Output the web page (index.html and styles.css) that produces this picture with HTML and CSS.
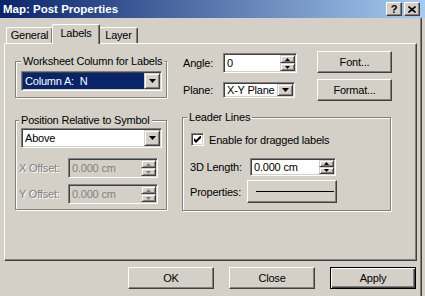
FILE: index.html
```html
<!DOCTYPE html>
<html lang="en">
<head>
  <meta charset="UTF-8" />
  <title>Map: Post Properties</title>
  <link rel="stylesheet" href="styles.css">
</head>
<body>

  <div class="window">
    <div class="titlebar">
      <span class="title">Map: Post Properties</span>
      <div class="caption-btns">
        <span class="cbtn help">?</span>
        <span class="cbtn">
          <svg width="8" height="7" viewBox="0 0 8 7"><path d="M0.5 0.5L7.5 6.5M7.5 0.5L0.5 6.5" stroke="#000" stroke-width="1.6"/></svg>
        </span>
      </div>
    </div>

    <div class="client">
      <div class="tabs">
        <div class="tab">General</div>
        <div class="tab active">Labels</div>
        <div class="tab">Layer</div>
      </div>

      <div class="panel">
        <div class="col-left">
          <fieldset class="group g-column">
            <legend>Worksheet Column for Labels</legend>
            <div class="combo combo-selected">
              <span class="combo-text">Column A:  N</span>
              <span class="drop-btn"><svg width="7" height="4" viewBox="0 0 7 4"><path d="M0 0h7L3.5 4z"/></svg></span>
            </div>
          </fieldset>

          <fieldset class="group g-position">
            <legend>Position Relative to Symbol</legend>
            <div class="combo">
              <span class="combo-text">Above</span>
              <span class="drop-btn"><svg width="7" height="4" viewBox="0 0 7 4"><path d="M0 0h7L3.5 4z"/></svg></span>
            </div>
            <div class="offset-row first">
              <span class="label disabled">X Offset:</span>
              <div class="edit edit-disabled">
                <span class="edit-text">0.000 cm</span>
                <span class="spin">
                  <span class="spin-btn"><svg width="5" height="3" viewBox="0 0 5 3"><path d="M0 3h5L2.5 0z"/></svg></span>
                  <span class="spin-btn"><svg width="5" height="3" viewBox="0 0 5 3"><path d="M0 0h5L2.5 3z"/></svg></span>
                </span>
              </div>
            </div>
            <div class="offset-row">
              <span class="label disabled">Y Offset:</span>
              <div class="edit edit-disabled">
                <span class="edit-text">0.000 cm</span>
                <span class="spin">
                  <span class="spin-btn"><svg width="5" height="3" viewBox="0 0 5 3"><path d="M0 3h5L2.5 0z"/></svg></span>
                  <span class="spin-btn"><svg width="5" height="3" viewBox="0 0 5 3"><path d="M0 0h5L2.5 3z"/></svg></span>
                </span>
              </div>
            </div>
          </fieldset>
        </div>

        <div class="col-right">
          <div class="top-area">
            <div class="fields">
              <div class="field-row">
                <span class="label angle-label">Angle:</span>
                <div class="edit angle-edit">
                  <span class="edit-text">0</span>
                  <span class="spin">
                    <span class="spin-btn"><svg width="5" height="3" viewBox="0 0 5 3"><path d="M0 3h5L2.5 0z"/></svg></span>
                    <span class="spin-btn"><svg width="5" height="3" viewBox="0 0 5 3"><path d="M0 0h5L2.5 3z"/></svg></span>
                  </span>
                </div>
              </div>
              <div class="field-row plane-row">
                <span class="label angle-label">Plane:</span>
                <div class="combo plane-combo">
                  <span class="combo-text">X-Y Plane</span>
                  <span class="drop-btn"><svg width="7" height="4" viewBox="0 0 7 4"><path d="M0 0h7L3.5 4z"/></svg></span>
                </div>
              </div>
            </div>
            <div class="side-btns">
              <button class="btn">Font...</button>
              <button class="btn">Format...</button>
            </div>
          </div>

          <fieldset class="group g-leader">
            <legend>Leader Lines</legend>
            <div class="check-row">
              <span class="checkbox">
                <svg width="7" height="7" viewBox="0 0 7 7"><path d="M0 2v3l2 2l5-5v-3l-5 5z"/></svg>
              </span>
              <span class="label">Enable for dragged labels</span>
            </div>
            <div class="field-row length-row">
              <span class="label length-label">3D Length:</span>
              <div class="edit length-edit">
                <span class="edit-text">0.000 cm</span>
                <span class="spin">
                  <span class="spin-btn"><svg width="5" height="3" viewBox="0 0 5 3"><path d="M0 3h5L2.5 0z"/></svg></span>
                  <span class="spin-btn"><svg width="5" height="3" viewBox="0 0 5 3"><path d="M0 0h5L2.5 3z"/></svg></span>
                </span>
              </div>
            </div>
            <div class="field-row props-row">
              <span class="label props-label">Properties:</span>
              <button class="btn line-btn"><span class="line-sample"></span></button>
            </div>
          </fieldset>
        </div>
      </div>

      <div class="footer">
        <button class="btn big">OK</button>
        <button class="btn big">Close</button>
        <button class="btn big default">Apply</button>
      </div>
    </div>
  </div>

</body>
</html>
```

FILE: styles.css
```css
* {
  margin: 0;
  padding: 0;
  box-sizing: border-box;
}

body {
  font-family: 'Liberation Sans', Arial, sans-serif;
  font-size: 11px;
  letter-spacing: -0.2px;
  color: #000;
  background-color: #d4d0c8;
}

.window {
  width: 425px;
  height: 296px;
  overflow: hidden;
  background-color: #d4d0c8;
  box-shadow: inset -3px 0 #d4d0c8, inset -4px 0 #404040, inset -5px 0 #808080;
}

/* title bar */

.titlebar {
  height: 18px;
  display: flex;
  justify-content: space-between;
  align-items: center;
  padding: 0 5px 0 3px;
  background: linear-gradient(to right, #0a246a, #a6caf0);
}

.title {
  color: #fff;
  font-weight: bold;
  font-size: 11.5px;
  letter-spacing: 0;
}

.caption-btns {
  display: flex;
  gap: 2px;
}

.cbtn {
  width: 16px;
  height: 14px;
  display: flex;
  justify-content: center;
  align-items: center;
  background-color: #d4d0c8;
  border: 1px solid;
  border-color: #fff #404040 #404040 #fff;
  box-shadow: inset -1px -1px #808080;
}

.cbtn.help {
  font-weight: bold;
  font-size: 11px;
  line-height: 12px;
}

/* tabs */

.client {
  padding: 6px 8px 0 4px;
}

.tabs {
  display: flex;
  align-items: flex-end;
  height: 19px;
  padding-left: 2px;
}

.tab {
  height: 16px;
  line-height: 14px;
  text-align: center;
  border: 1px solid #fff;
  border-bottom: none;
  border-right-color: #404040;
  box-shadow: inset -1px 0 #808080;
  border-radius: 2px 2px 0 0;
}

.tab:nth-child(1) {
  width: 47px;
}

.tab.active {
  width: 48px;
  height: 20px;
  line-height: 17px;
  margin: 0 -1px -1px -1px;
  position: relative;
  z-index: 1;
  background-color: #d4d0c8;
}

.tab:nth-child(3) {
  width: 39px;
}

.panel {
  height: 218px;
  display: flex;
  gap: 15px;
  padding-left: 10px;
  border: 1px solid;
  border-color: #fff #404040 #404040 #fff;
  box-shadow: inset -1px -1px #808080;
}

/* group boxes */

.group {
  border: 1px solid #808080;
  box-shadow: inset 1px 1px #fff, 1px 1px #fff;
  min-width: 0;
}

.group legend {
  line-height: 13px;
  padding: 0 2px;
  white-space: nowrap;
  background-color: #d4d0c8;
}

.col-left {
  width: 152px;
  flex-shrink: 0;
  padding-top: 11px;
}

.g-column {
  padding: 3px 4px 6px 5px;
}

.g-position {
  margin-top: 16px;
  padding: 1px 4px 5px 3px;
}

.g-position .combo {
  margin-left: 2px;
}

.offset-row {
  display: flex;
  align-items: center;
  margin-top: 6px;
}

.offset-row.first {
  margin-top: 10px;
}

.offset-row .label {
  width: 49px;
}

.offset-row .edit {
  width: 90px;
}

/* controls */

.label {
  white-space: nowrap;
}

.disabled {
  color: #808080;
  text-shadow: 1px 1px #fff;
}

.combo,
.edit {
  display: flex;
  height: 20px;
  padding: 1px;
  background-color: #fff;
  border: 1px solid;
  border-color: #808080 #fff #fff #808080;
  box-shadow: inset 1px 1px #404040, inset -1px -1px #d4d0c8;
}

.combo-text,
.edit-text {
  flex: 1;
  padding-left: 2px;
  line-height: 16px;
  white-space: pre;
  overflow: hidden;
}

.combo-selected .combo-text {
  background-color: #0a246a;
  color: #fff;
}

.drop-btn {
  width: 16px;
  display: flex;
  justify-content: center;
  align-items: center;
  background-color: #d4d0c8;
  border: 1px solid;
  border-color: #d4d0c8 #404040 #404040 #d4d0c8;
  box-shadow: inset 1px 1px #fff, inset -1px -1px #808080;
}

.spin {
  width: 15px;
  display: flex;
  flex-direction: column;
}

.spin-btn {
  flex: 1;
  display: flex;
  justify-content: center;
  align-items: center;
  background-color: #d4d0c8;
  border: 1px solid;
  border-color: #d4d0c8 #404040 #404040 #d4d0c8;
  box-shadow: inset 1px 1px #fff, inset -1px -1px #808080;
}

.edit-disabled {
  background-color: #d4d0c8;
  color: #808080;
}

.edit-disabled .spin-btn path {
  fill: #808080;
}

.btn {
  display: flex;
  justify-content: center;
  align-items: center;
  height: 22px;
  font-family: inherit;
  font-size: inherit;
  letter-spacing: inherit;
  color: #000;
  background-color: #d4d0c8;
  border: 1px solid;
  border-color: #fff #404040 #404040 #fff;
  box-shadow: inset -1px -1px #808080;
}

/* right column */

.col-right {
  width: 210px;
  flex-shrink: 0;
  padding-top: 7px;
}

.top-area {
  display: flex;
  justify-content: space-between;
}

.fields {
  margin: 2px 0 0 1px;
}

.field-row {
  display: flex;
  align-items: center;
}

.angle-label {
  width: 40px;
}

.angle-edit {
  width: 74px;
}

.plane-row {
  margin-top: 9px;
}

.plane-combo {
  width: 72px;
  height: 16px;
}

.plane-combo .combo-text {
  line-height: 12px;
}

.side-btns {
  display: flex;
  flex-direction: column;
  gap: 6px;
}

.side-btns .btn {
  width: 75px;
}

.g-leader {
  width: 209px;
  margin-top: 10px;
  padding: 0 7px 7px 7px;
}

.g-leader legend {
  margin-left: -3px;
}

.check-row {
  display: flex;
  align-items: center;
  margin: 9px 0 0 1px;
  gap: 5px;
}

.checkbox {
  width: 13px;
  height: 13px;
  display: flex;
  justify-content: center;
  align-items: center;
  background-color: #fff;
  border: 1px solid;
  border-color: #808080 #fff #fff #808080;
  box-shadow: inset 1px 1px #404040, inset -1px -1px #d4d0c8;
}

.length-row {
  margin-top: 12px;
}

.length-label {
  width: 60px;
}

.length-edit {
  width: 86px;
  height: 18px;
}

.length-edit .edit-text {
  line-height: 14px;
}

.props-row {
  margin-top: 4px;
}

.props-label {
  width: 57px;
}

.line-btn {
  width: 90px;
  height: 23px;
  justify-content: flex-start;
  padding-left: 8px;
}

.line-sample {
  width: 78px;
  height: 1px;
  background-color: #000;
}

/* bottom buttons */

.footer {
  display: flex;
  justify-content: flex-end;
  gap: 15px;
  margin-top: 6px;
  padding-right: 1px;
}

.btn.big {
  width: 86px;
}

.btn.default {
  border-color: #000;
  box-shadow: inset 1px 1px #fff, inset -1px -1px #404040, inset -2px -2px #808080;
}
```
